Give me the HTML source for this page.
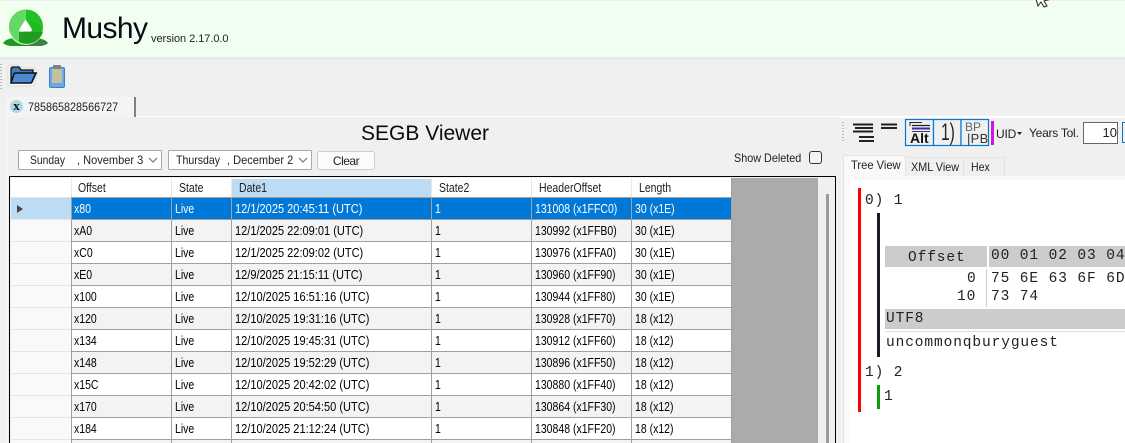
<!DOCTYPE html>
<html><head><meta charset="utf-8">
<style>
html,body{margin:0;padding:0}
body{width:1125px;height:443px;overflow:hidden;background:#f0f0f0;position:relative;font-family:"Liberation Sans",sans-serif;color:#000}
.a{position:absolute;white-space:pre}
.r{position:absolute;left:0;top:0}
.c{position:absolute;font-size:12.5px;line-height:22px;white-space:pre;height:22px;transform:scaleX(.84);transform-origin:0 50%}
.c[style*="left:235px"]{transform:scaleX(.883)}
.s{transform:scaleX(.92);transform-origin:0 50%;font-size:12px;line-height:16px;color:#222}
.m{font-family:"Liberation Mono",monospace;font-size:14.5px;letter-spacing:.9px;position:absolute;white-space:pre;color:#222;line-height:16px}
</style></head><body>
<div class="a" style="left:0;top:1px;width:1125px;height:56px;background:#f0fff0"></div>
<div class="a" style="left:0;top:57px;width:1125px;height:3px;background:#eaeaea"></div>
<svg class="r" width="70" height="95" style="left:0;top:0">
<path d="M3 43q3-4 10-5h24q8 1 11 5-3 3-10 3H13q-7 0-10-3z" fill="#1e9a1e"/>
<path d="M26 39h12q8 1 10 4-3 3-10 3H26z" fill="#3f7f3f"/>
<circle cx="26" cy="27" r="18" fill="#fff" opacity=".8"/>
<circle cx="26" cy="26.500" r="17" fill="#22c022"/>
<path d="M26 9.500a17 17 0 0 0-7 32.500l7-16z" fill="#66d866"/>
<path d="M19 32h24a17 17 0 0 1-24 10z" fill="#1e9e1e"/>
<path d="M30 20l13 9v3H30z" fill="#1e9e1e" opacity=".25"/>
<path d="M20.500 31.500q-2 0-1-2.500l6-9.500 6 9q1 3-1 3z" fill="#fff"/>
<path d="M1 64v26" stroke="#bbb" stroke-width="2" stroke-dasharray="1 2"/>
<path d="M9 86q-1 0-1-2V67q0-2 3-2h7l3 3h13l3 3v5l-3 9q0 1-2 1z" fill="#fff" opacity=".6" stroke="#ccc" stroke-width="1"/>
<path d="M11 83V69q0-2 2-2h6l2 3h12v3" fill="#3e7cc0" stroke="#111" stroke-width="1.300"/>
<path d="M11 83l3-9q.5-1 2-1h20l-4 9q-.5 1-2 1z" fill="#4b8ad0" stroke="#111" stroke-width="1.600"/>
<rect x="49.500" y="67.500" width="15" height="20" rx="1.500" fill="#6ea8e0" stroke="#3a80c8"/>
<rect x="52" y="69" width="10" height="14" fill="#c4bfa0"/>
<rect x="53" y="65" width="8" height="4" fill="#808080"/>
</svg>
<div class="a" style="left:62px;top:10px;font-size:30px;line-height:38px;color:#0a0a14;letter-spacing:-.6px">Mushy</div>
<div class="a" style="left:151px;top:32px;font-size:11px;line-height:14px;letter-spacing:-.05px;color:#222">version 2.17.0.0</div>
<svg class="r" width="20" height="20" style="left:1033px;top:-9px"><path d="M1 1l4 14 3-4 3 5 3-1-3-5 4-1z" fill="#fff" stroke="#222"/></svg>

<div class="a" style="left:6px;top:116px;width:1119px;height:1px;background:#fff"></div>
<div class="a" style="left:6px;top:97px;width:128px;height:20px;background:#f4f4f4;border-right:2px solid #808080"></div>
<div class="a" style="left:10px;top:100px;width:13px;height:13px;border-radius:50%;background:#add8e6;font:bold 13px/12px 'Liberation Serif',serif;text-align:center;color:#111">x</div>
<div class="a s" style="left:28px;top:99px;transform:scaleX(.9)">785865828566727</div>

<div class="a" style="left:6px;top:117px;width:1px;height:326px;background:#fafafa"></div>
<div class="a" style="left:361px;top:122px;font-size:21px;line-height:24px;color:#0a0a0a">SEGB Viewer</div>

<div class="a" style="left:18px;top:150px;width:142px;height:18px;background:#fff;border:1px solid #aaa;border-radius:1px"></div>
<div class="a s" style="left:30px;top:152px;transform:scaleX(.86)">Sunday</div>
<div class="a s" style="left:77px;top:152px;width:74px;overflow:hidden">, November 3</div>
<div class="a" style="left:168px;top:150px;width:142px;height:18px;background:#fff;border:1px solid #aaa;border-radius:1px"></div>
<div class="a s" style="left:176px;top:152px;transform:scaleX(.88)">Thursday</div>
<div class="a s" style="left:227px;top:152px;width:74px;overflow:hidden">, December 2</div>
<svg class="r" width="320" height="175"><path d="M149 158l4 4 4-4M299 158l4 4 4-4" fill="none" stroke="#666"/></svg>
<div class="a" style="left:317px;top:151px;width:56px;height:17px;background:#fbfbfb;border:1px solid #ccc;border-radius:3px;font-size:12px;line-height:19px;text-align:center;letter-spacing:-.5px;color:#222">Clear</div>
<div class="a s" style="left:734px;top:150px;transform:scaleX(.9)">Show Deleted</div>
<div class="a" style="left:809px;top:151px;width:11px;height:11px;background:#f4f4f4;border:1px solid #333;border-radius:3px"></div>

<!-- grid -->
<div class="a" style="left:9px;top:176px;width:827px;height:267px;background:#f0f0f0;border-left:1px solid #000;border-top:1px solid #000;border-right:1px solid #000;box-sizing:border-box"></div>
<div class="a" style="left:11px;top:178px;width:721px;height:19px;background:#fff"></div>
<div class="a" style="left:11px;top:198px;width:60px;height:245px;background:#f9f9f9"></div>
<div class="a" style="left:232px;top:179px;width:200px;height:18px;background:#bcdcf4"></div>
<div class="a" style="left:732px;top:178px;width:86px;height:265px;background:#ababab"></div>
<div class="a" style="left:826px;top:194px;width:3px;height:249px;background:#9a9a9a"></div>
<div class="a" style="left:72px;top:198px;width:660px;height:21px;background:#0078d7"></div>
<div class="a" style="left:11px;top:198px;width:60px;height:21px;background:#bcdcf4"></div>
<div class="a" style="left:72px;top:220px;width:660px;height:21px;background:#f3f3f3"></div>
<div class="a" style="left:72px;top:242px;width:660px;height:21px;background:#fff"></div>
<div class="a" style="left:72px;top:264px;width:660px;height:21px;background:#f3f3f3"></div>
<div class="a" style="left:72px;top:286px;width:660px;height:21px;background:#fff"></div>
<div class="a" style="left:72px;top:308px;width:660px;height:21px;background:#f3f3f3"></div>
<div class="a" style="left:72px;top:330px;width:660px;height:21px;background:#fff"></div>
<div class="a" style="left:72px;top:352px;width:660px;height:21px;background:#f3f3f3"></div>
<div class="a" style="left:72px;top:374px;width:660px;height:21px;background:#fff"></div>
<div class="a" style="left:72px;top:396px;width:660px;height:21px;background:#f3f3f3"></div>
<div class="a" style="left:72px;top:418px;width:660px;height:21px;background:#fff"></div>
<div class="a" style="left:72px;top:440px;width:660px;height:3px;background:#f3f3f3"></div>
<svg class="r" width="740" height="443">
<path d="M72 197.500H732M72 219.500H732M72 241.500H732M72 263.500H732M72 285.500H732M72 307.500H732M72 329.500H732M72 351.500H732M72 373.500H732M72 395.500H732M72 417.500H732M72 439.500H732" stroke="#a0a0a0"/>
<path d="M11 197.500H71M11 219.500H71M11 241.500H71M11 263.500H71M11 285.500H71M11 307.500H71M11 329.500H71M11 351.500H71M11 373.500H71M11 395.500H71M11 417.500H71M11 439.500H71" stroke="#e6e6e6"/>
<path d="M71.500 197V443M171.500 197V443M231.500 197V443M431.500 197V443M531.500 197V443M631.500 197V443M731.500 178V443" stroke="#a0a0a0"/>
<path d="M171.500 178V197M231.500 178V197M431.500 178V197M531.500 178V197M631.500 178V197M71.500 178V197" stroke="#e8e8e8"/>
<path d="M17 205l6 4-6 4z" fill="#444"/>
</svg>
<div class="c" style="left:78px;top:177px;color:#222">Offset</div><div class="c" style="left:179px;top:177px;color:#222">State</div><div class="c" style="left:239px;top:177px;color:#222">Date1</div><div class="c" style="left:439px;top:177px;color:#222">State2</div><div class="c" style="left:539px;top:177px;color:#222">HeaderOffset</div><div class="c" style="left:639px;top:177px;color:#222">Length</div>
<div class="c" style="left:74px;top:198px;color:#fff">x80</div><div class="c" style="left:175px;top:198px;color:#fff">Live</div><div class="c" style="left:235px;top:198px;color:#fff">12/1/2025 20:45:11 (UTC)</div><div class="c" style="left:435px;top:198px;color:#fff">1</div><div class="c" style="left:535px;top:198px;color:#fff">131008 (x1FFC0)</div><div class="c" style="left:635px;top:198px;color:#fff">30 (x1E)</div>
<div class="c" style="left:74px;top:220px">xA0</div><div class="c" style="left:175px;top:220px">Live</div><div class="c" style="left:235px;top:220px">12/1/2025 22:09:01 (UTC)</div><div class="c" style="left:435px;top:220px">1</div><div class="c" style="left:535px;top:220px">130992 (x1FFB0)</div><div class="c" style="left:635px;top:220px">30 (x1E)</div>
<div class="c" style="left:74px;top:242px">xC0</div><div class="c" style="left:175px;top:242px">Live</div><div class="c" style="left:235px;top:242px">12/1/2025 22:09:02 (UTC)</div><div class="c" style="left:435px;top:242px">1</div><div class="c" style="left:535px;top:242px">130976 (x1FFA0)</div><div class="c" style="left:635px;top:242px">30 (x1E)</div>
<div class="c" style="left:74px;top:264px">xE0</div><div class="c" style="left:175px;top:264px">Live</div><div class="c" style="left:235px;top:264px">12/9/2025 21:15:11 (UTC)</div><div class="c" style="left:435px;top:264px">1</div><div class="c" style="left:535px;top:264px">130960 (x1FF90)</div><div class="c" style="left:635px;top:264px">30 (x1E)</div>
<div class="c" style="left:74px;top:286px">x100</div><div class="c" style="left:175px;top:286px">Live</div><div class="c" style="left:235px;top:286px">12/10/2025 16:51:16 (UTC)</div><div class="c" style="left:435px;top:286px">1</div><div class="c" style="left:535px;top:286px">130944 (x1FF80)</div><div class="c" style="left:635px;top:286px">30 (x1E)</div>
<div class="c" style="left:74px;top:308px">x120</div><div class="c" style="left:175px;top:308px">Live</div><div class="c" style="left:235px;top:308px">12/10/2025 19:31:16 (UTC)</div><div class="c" style="left:435px;top:308px">1</div><div class="c" style="left:535px;top:308px">130928 (x1FF70)</div><div class="c" style="left:635px;top:308px">18 (x12)</div>
<div class="c" style="left:74px;top:330px">x134</div><div class="c" style="left:175px;top:330px">Live</div><div class="c" style="left:235px;top:330px">12/10/2025 19:45:31 (UTC)</div><div class="c" style="left:435px;top:330px">1</div><div class="c" style="left:535px;top:330px">130912 (x1FF60)</div><div class="c" style="left:635px;top:330px">18 (x12)</div>
<div class="c" style="left:74px;top:352px">x148</div><div class="c" style="left:175px;top:352px">Live</div><div class="c" style="left:235px;top:352px">12/10/2025 19:52:29 (UTC)</div><div class="c" style="left:435px;top:352px">1</div><div class="c" style="left:535px;top:352px">130896 (x1FF50)</div><div class="c" style="left:635px;top:352px">18 (x12)</div>
<div class="c" style="left:74px;top:374px">x15C</div><div class="c" style="left:175px;top:374px">Live</div><div class="c" style="left:235px;top:374px">12/10/2025 20:42:02 (UTC)</div><div class="c" style="left:435px;top:374px">1</div><div class="c" style="left:535px;top:374px">130880 (x1FF40)</div><div class="c" style="left:635px;top:374px">18 (x12)</div>
<div class="c" style="left:74px;top:396px">x170</div><div class="c" style="left:175px;top:396px">Live</div><div class="c" style="left:235px;top:396px">12/10/2025 20:54:50 (UTC)</div><div class="c" style="left:435px;top:396px">1</div><div class="c" style="left:535px;top:396px">130864 (x1FF30)</div><div class="c" style="left:635px;top:396px">18 (x12)</div>
<div class="c" style="left:74px;top:418px">x184</div><div class="c" style="left:175px;top:418px">Live</div><div class="c" style="left:235px;top:418px">12/10/2025 21:12:24 (UTC)</div><div class="c" style="left:435px;top:418px">1</div><div class="c" style="left:535px;top:418px">130848 (x1FF20)</div><div class="c" style="left:635px;top:418px">18 (x12)</div>

<!-- right panel -->
<div class="a" style="left:837px;top:117px;width:288px;height:326px;background:#f0f0f0"></div>
<div class="a" style="left:842px;top:117px;width:283px;height:1px;background:#fff"></div>
<div class="a" style="left:844px;top:176px;width:281px;height:267px;background:#f9f9f9"></div>
<div class="a" style="left:850px;top:180px;width:275px;height:263px;background:#fff"></div>
<div class="a" style="left:843px;top:176px;width:1px;height:267px;background:#e4e4e4"></div>
<svg class="r" width="1125" height="175">
<path d="M843 122v20" stroke="#bbb" stroke-width="2" stroke-dasharray="1 2"/>
<path d="M853 124.500h20M855 128h18M853 131.500h20M859 137h15M859 141h15" stroke="#222" stroke-width="2"/>
<path d="M881 124.500h16M881 128h16" stroke="#222" stroke-width="2"/>
<rect x="905.500" y="119.500" width="28" height="26" fill="#f0f0f0" stroke="#0078d7" stroke-width="1.200"/>
<rect x="933.500" y="119.500" width="27.500" height="26" fill="#f0f0f0" stroke="#0078d7" stroke-width="1.200"/>
<rect x="961" y="119.500" width="27.500" height="26" fill="#f0f0f0" stroke="#0078d7" stroke-width="1.200"/>
<path d="M910 122.500h12M910 122v4" stroke="#222"/>
<path d="M912 125.500h18" stroke="#222" stroke-width="1.300"/>
<path d="M912 128.500h18" stroke="#3a2ab0" stroke-width="2"/>
<path d="M912 131.500h18" stroke="#444"/>
<rect x="991" y="121" width="3" height="24" fill="#d214e0"/>
</svg>
<div class="a" style="left:910px;top:131px;font:bold 14px/14px 'Liberation Sans',sans-serif;color:#111">Alt</div>
<div class="a" style="left:941px;top:119px;font-size:24px;line-height:27px;color:#222;transform:scaleX(.65);transform-origin:0 50%">1)</div>
<div class="a" style="left:965px;top:121px;font-size:12px;line-height:13px;color:#666">BP</div>
<div class="a" style="left:967px;top:132px;font-size:13px;line-height:13px;color:#333;letter-spacing:.3px">|PB</div>
<div class="a" style="left:996px;top:126px;font-size:12px;line-height:16px;letter-spacing:-.2px;color:#222">UID</div>
<svg class="r" width="1030" height="140"><path d="M1017 132h5l-2.500 3z" fill="#222"/></svg>
<div class="a" style="left:1029px;top:125px;font-size:12px;line-height:16px;letter-spacing:-.25px;color:#222">Years Tol.</div>
<div class="a" style="left:1083px;top:122px;width:33px;height:20px;background:#fff;border:1px solid #666;font-size:13px;line-height:19px;text-align:right;color:#222;box-sizing:content-box">10</div>
<div class="a" style="left:1122px;top:122px;width:3px;height:21px;background:#f0f0f0;border-left:1.500px solid #0078d7;border-top:1px solid #0078d7;border-bottom:1px solid #0078d7;box-sizing:border-box"></div>

<div class="a" style="left:843px;top:155px;width:63px;height:21px;background:#f9f9f9;border:1px solid #e4e4e4;border-bottom:0;box-sizing:border-box"></div>
<div class="a s" style="left:851px;top:157px;transform:scaleX(.93)">Tree View</div>
<div class="a" style="left:906px;top:157px;width:58px;height:19px;background:#f0f0f0;border-top:1px solid #e4e4e4;border-right:1px solid #e4e4e4;box-sizing:border-box"></div>
<div class="a s" style="left:911px;top:159px;transform:scaleX(.9)">XML View</div>
<div class="a" style="left:964px;top:157px;width:41px;height:19px;background:#f0f0f0;border-top:1px solid #e4e4e4;border-right:1px solid #e4e4e4;box-sizing:border-box"></div>
<div class="a s" style="left:971px;top:159px;transform:scaleX(.88)">Hex</div>

<div class="a" style="left:858px;top:188px;width:3px;height:224px;background:#ff0000"></div>
<div class="a" style="left:877px;top:213px;width:3px;height:144px;background:#1a1a28"></div>
<div class="a" style="left:877px;top:385px;width:3px;height:24px;background:#119911"></div>
<div class="m" style="left:865px;top:193px">0) 1</div>

<div class="a" style="left:885px;top:246px;width:102px;height:21px;background:#cccccc"></div>
<div class="a" style="left:989px;top:246px;width:136px;height:21px;background:#cccccc"></div>
<div class="a" style="left:986px;top:269px;width:1px;height:38px;background:#ccc"></div>
<div class="m" style="left:908px;top:250px">Offset</div>
<div class="m" style="left:991px;top:248px">00 01 02 03 04</div>
<div class="m" style="left:967px;top:271px">0</div>
<div class="m" style="left:957px;top:289px">10</div>
<div class="m" style="left:991px;top:271px">75 6E 63 6F 6D</div>
<div class="m" style="left:991px;top:289px">73 74</div>
<div class="a" style="left:885px;top:309px;width:240px;height:20px;background:#cccccc"></div>
<div class="a" style="left:885px;top:331px;width:240px;height:1px;background:#ddd"></div>
<div class="m" style="left:886px;top:311px">UTF8</div>
<div class="m" style="left:886px;top:335px">uncommonqburyguest</div>
<div class="m" style="left:865px;top:365px">1) 2</div>
<div class="m" style="left:884px;top:389px">1</div>
</body></html>
